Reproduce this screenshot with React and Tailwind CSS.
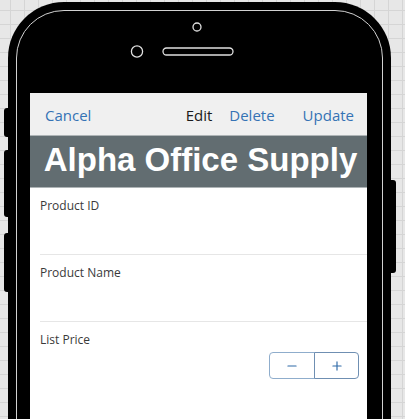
import { Minus, Plus } from 'lucide-react'

const fields = ['Product ID', 'Product Name', 'List Price']

const Field = ({ label, last, children }) => (
  <div className={last ? 'ml-[10px] h-[67px] pt-[10px]' : 'ml-[10px] h-[67px] border-b border-[#e6e6e6] pt-[10px]'}>
    <div className="text-[12px] leading-[16px] text-[#3a3a3a]">{label}</div>
    {children}
  </div>
)

const Stepper = () => (
  <div className="mt-[4px] mr-[8px] flex justify-end">
    <button className="flex h-[27px] w-[46px] items-center justify-center rounded-l-[4px] border border-[#8fadcc] bg-white text-[#2f6aa8]">
      <Minus size={14} strokeWidth={2} />
    </button>
    <button className="-ml-px flex h-[27px] w-[45px] items-center justify-center rounded-r-[4px] border border-[#6f8fb2] bg-white text-[#2f6aa8]">
      <Plus size={14} strokeWidth={2} />
    </button>
  </div>
)

export default function App() {
  return (
    <div className="h-[419px] w-[405px] overflow-hidden bg-[#e7e7e7] bg-[linear-gradient(#d5d5d5_1px,transparent_1px),linear-gradient(90deg,#d5d5d5_1px,transparent_1px)] bg-[size:14px_14px] bg-[position:10px_10px] pt-[2px] pl-[8px]">
      {/* phone body */}
      <div className="relative h-[480px] w-[383px] rounded-[56px] bg-black p-[8px]">
        {/* side buttons */}
        <div className="absolute top-[106px] left-[-4px] h-[29px] w-[5px] rounded-l-[3px] bg-black" />
        <div className="absolute top-[148px] left-[-4px] h-[67px] w-[5px] rounded-l-[3px] bg-black" />
        <div className="absolute top-[231px] left-[-4px] h-[59px] w-[5px] rounded-l-[3px] bg-black" />
        <div className="absolute top-[178px] left-[382px] h-[93px] w-[6px] rounded-r-[3px] bg-black" />

        <div className="flex h-full flex-col rounded-[48px] border border-[#d2d2d2] pr-[15px] pl-[13px]">
          {/* camera + speaker */}
          <svg width="337" height="82" className="-ml-[13px] shrink-0" viewBox="0 0 337 82">
            <circle cx="180" cy="16" r="4" fill="none" stroke="#e0e0e0" strokeWidth="1.3" />
            <circle cx="120" cy="40.5" r="5.6" fill="none" stroke="#e0e0e0" strokeWidth="1.3" />
            <rect x="146" y="37" width="70" height="7" rx="3.5" fill="none" stroke="#e0e0e0" strokeWidth="1.3" />
          </svg>

          {/* screen */}
          <div className="flex-1 bg-white font-['Open_Sans',sans-serif]">
            <div className="flex h-[42px] items-center bg-[#f0f0f0] pt-[2px] pr-[13px] pl-[15px] text-[15px]">
              <span className="text-[#3573b5]">Cancel</span>
              <span className="flex-1" />
              <span className="text-[#1a1a1a]">Edit</span>
              <span className="ml-[17px] text-[#3573b5]">Delete</span>
              <span className="ml-[28px] text-[#3573b5]">Update</span>
            </div>
            <div className="h-[53px] border-y border-[#aeb4b6] bg-[#626d71] pt-[5px] pl-[4px] text-center font-['Liberation_Sans',Arial,sans-serif] text-[33px] leading-[38px] font-bold text-white">
              Alpha Office Supply
            </div>
            {fields.map((f, i) => (
              <Field key={f} label={f} last={i === fields.length - 1}>
                {f === 'List Price' && <Stepper />}
              </Field>
            ))}
          </div>
        </div>
      </div>
    </div>
  )
}
